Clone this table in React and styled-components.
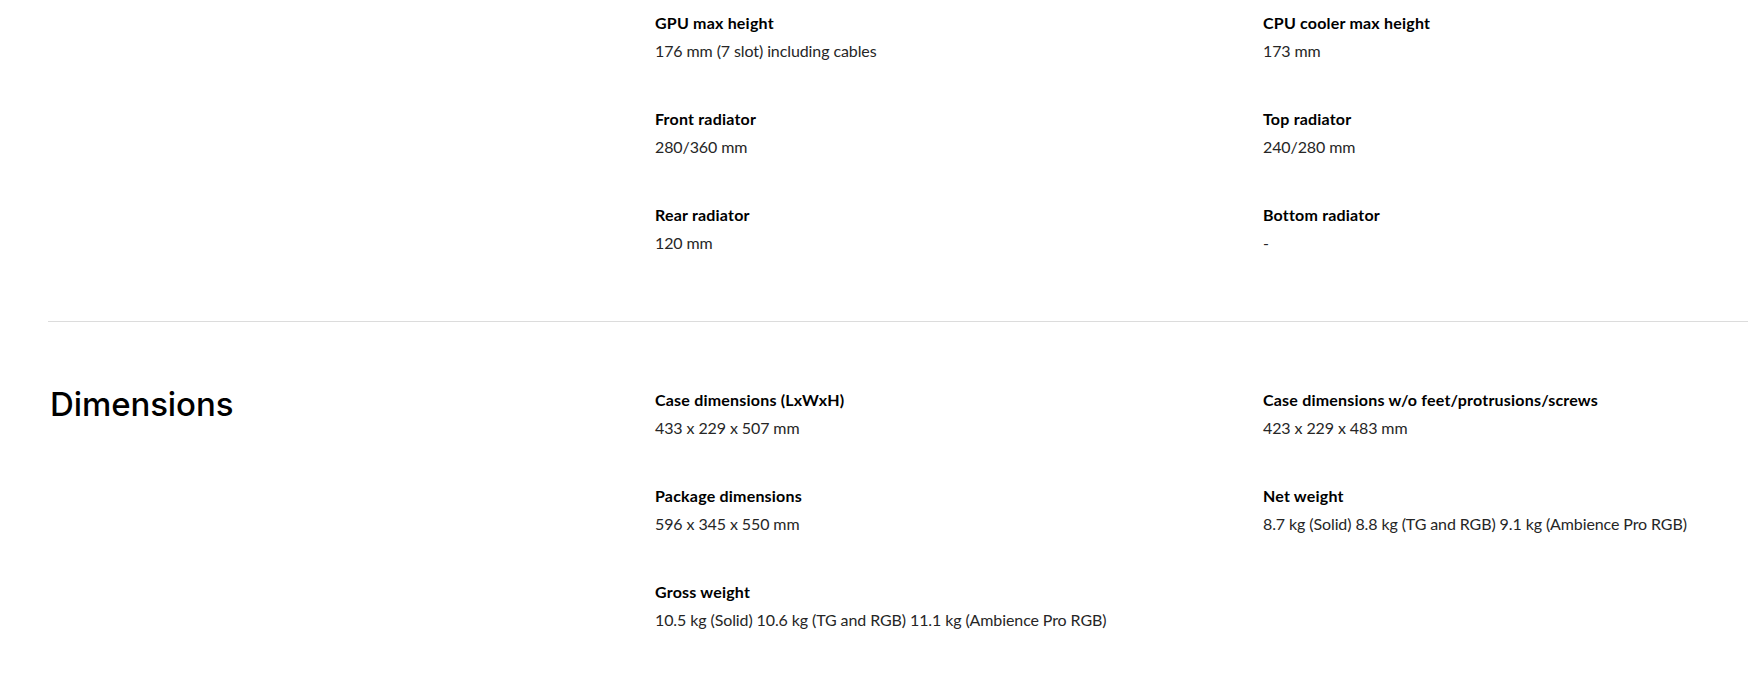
import React from "react";
import styled, { createGlobalStyle } from "styled-components";

const GlobalStyle = createGlobalStyle`
  html, body {
    margin: 0;
    padding: 0;
    background: #ffffff;
    overflow: hidden;
  }
  body {
    font-family: "Lato", "Liberation Sans", sans-serif;
    color: #000;
    -webkit-font-smoothing: antialiased;
  }
`;

const Page = styled.div`
  width: 100%;
  display: flex;
  flex-direction: column;
`;

const Section = styled.section`
  display: grid;
  grid-template-columns: 607px 608px 1fr;
  padding: ${(p) => (p.$first ? "11px" : "66px")} 0 66px;
  border-top: ${(p) => (p.$first ? "none" : "1px solid #dcdcdc")};
  margin-left: ${(p) => (p.$first ? "0" : "48px")};
  padding-left: ${(p) => (p.$first ? "48px" : "0")};
`;

const Heading = styled.h2`
  margin: 0;
  padding-left: 2px;
  font-family: "Inter", "Liberation Sans", sans-serif;
  font-size: 33px;
  font-weight: 500;
  line-height: 32px;
  letter-spacing: -0.1px;
  color: #000;
`;

const SpecGrid = styled.div`
  grid-column: 2 / span 2;
  display: grid;
  grid-template-columns: 608px 1fr;
  row-gap: 44px;
`;

const Spec = styled.div`
  display: flex;
  flex-direction: column;
  gap: 4px;
`;

const Label = styled.div`
  font-size: 16px;
  line-height: 24px;
  font-weight: 700;
  letter-spacing: 0.2px;
  color: #000;
`;

const Value = styled.div`
  font-size: 16px;
  line-height: 24px;
  font-weight: 400;
  letter-spacing: -0.1px;
  color: #262626;
`;

const sections = [
  {
    title: "",
    specs: [
      ["GPU max height", "176 mm (7 slot) including cables"],
      ["CPU cooler max height", "173 mm"],
      ["Front radiator", "280/360 mm"],
      ["Top radiator", "240/280 mm"],
      ["Rear radiator", "120 mm"],
      ["Bottom radiator", "-"],
    ],
  },
  {
    title: "Dimensions",
    specs: [
      ["Case dimensions (LxWxH)", "433 x 229 x 507 mm"],
      ["Case dimensions w/o feet/protrusions/screws", "423 x 229 x 483 mm"],
      ["Package dimensions", "596 x 345 x 550 mm"],
      ["Net weight", "8.7 kg (Solid) 8.8 kg (TG and RGB) 9.1 kg (Ambience Pro RGB)"],
      ["Gross weight", "10.5 kg (Solid) 10.6 kg (TG and RGB) 11.1 kg (Ambience Pro RGB)"],
    ],
  },
];

export default function App() {
  return (
    <Page>
      <GlobalStyle />
      {sections.map((s, i) => (
        <Section key={i} $first={i === 0}>
          <Heading>{s.title}</Heading>
          <SpecGrid>
            {s.specs.map(([label, value]) => (
              <Spec key={label}>
                <Label>{label}</Label>
                <Value>{value}</Value>
              </Spec>
            ))}
          </SpecGrid>
        </Section>
      ))}
    </Page>
  );
}
